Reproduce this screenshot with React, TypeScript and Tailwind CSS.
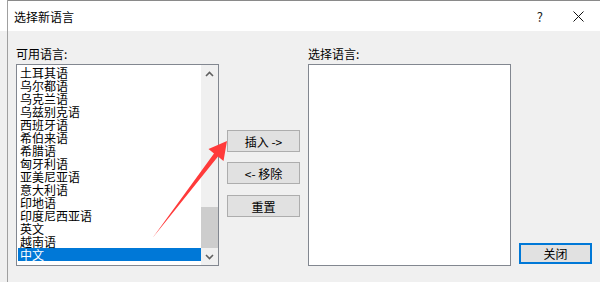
const languages = [
  "土耳其语",
  "乌尔都语",
  "乌克兰语",
  "乌兹别克语",
  "西班牙语",
  "希伯来语",
  "希腊语",
  "匈牙利语",
  "亚美尼亚语",
  "意大利语",
  "印地语",
  "印度尼西亚语",
  "英文",
  "越南语",
  "中文",
];

const font = { fontFamily: '"Noto Sans CJK SC", "Noto Sans", sans-serif' };

const Chevron: React.FC<{ up?: boolean }> = ({ up }) => (
  <svg width="9" height="6" viewBox="0 0 9 6">
    <path
      d={up ? "M1 5 L4.5 1.5 L8 5" : "M1 1 L4.5 4.5 L8 1"}
      fill="none"
      stroke="#606060"
      strokeWidth="1.6"
    />
  </svg>
);

const Button: React.FC<{ label: string; className?: string }> = ({ label, className }) => (
  <div
    className={`w-[73px] h-[22px] border border-[#adadad] bg-[#e1e1e1] flex items-center justify-center text-[12px] leading-[13px] text-black ${className ?? ""}`}
  >
    {label}
  </div>
);

export default function App() {
  return (
    <div className="relative w-[600px] h-[282px] overflow-hidden flex select-none" style={font}>
      {/* left strip outside the window */}
      <div className="w-[7px] flex flex-col">
        <div className="h-[31px] bg-white" />
        <div className="flex-1 bg-[#f0f0f0]" />
      </div>

      <div className="flex-1 flex flex-col border-l border-[#a0a0a0]">
        {/* title bar */}
        <div className="h-[31px] bg-white border-t border-[#8a8a8a] flex items-center pl-[6px]">
          <span className="text-[12px] leading-[13px] text-black">选择新语言</span>
          <span className="ml-auto text-[13px] leading-[13px] text-[#222] mr-[30px]">?</span>
          <svg width="11" height="11" viewBox="0 0 11 11" className="mr-[16px]">
            <path d="M0.5 0.5 L10.5 10.5 M10.5 0.5 L0.5 10.5" stroke="#111" strokeWidth="1" />
          </svg>
        </div>

        {/* body */}
        <div className="flex-1 bg-[#f0f0f0] flex pl-[8px] pt-[16px]">
          {/* available languages */}
          <div className="w-[203px] flex flex-col">
            <div className="h-[13px] leading-[13px] text-[12px] mb-[4px] text-black">可用语言:</div>
            <div className="h-[202px] border border-[#828790] bg-white flex">
              <div className="flex-1 pt-[1px] pl-[1px] overflow-hidden">
                {languages.map((l) => (
                  <div
                    key={l}
                    className={`h-[13px] leading-[13px] text-[12px] pl-[2px] whitespace-nowrap ${
                      l === "中文" ? "bg-[#0078d7] text-white" : "text-black"
                    }`}
                  >
                    {l}
                  </div>
                ))}
              </div>
              <div className="w-[17px] bg-[#f0f0f0] flex flex-col">
                <div className="h-[17px] flex items-center justify-center">
                  <Chevron up />
                </div>
                <div className="flex-1 flex flex-col justify-end">
                  <div className="h-[41px] bg-[#cdcdcd]" />
                </div>
                <div className="h-[17px] flex items-center justify-center">
                  <Chevron />
                </div>
              </div>
            </div>
          </div>

          {/* middle buttons */}
          <div className="w-[89px] pl-[8px] flex flex-col">
            <Button label="插入 ->" className="mt-[83px]" />
            <Button label="<- 移除" className="mt-[10px]" />
            <Button label="重置" className="mt-[11px]" />
          </div>

          {/* selected languages */}
          <div className="w-[203px] flex flex-col">
            <div className="h-[13px] leading-[13px] text-[12px] mb-[4px] text-black">选择语言:</div>
            <div className="h-[202px] border border-[#828790] bg-white" />
          </div>

          <div className="pl-[8px] flex flex-col">
            <div className="mt-[196px] w-[73px] h-[21px] border-2 border-[#0078d7] bg-[#e1e1e1] flex items-center justify-center text-[12px] leading-[13px] text-black">
              关闭
            </div>
          </div>
        </div>
      </div>

      {/* red annotation arrow */}
      <svg className="absolute left-0 top-0 pointer-events-none" width="600" height="282" viewBox="0 0 600 282">
        <polygon
          points="152.5,238 214,153.5 208.5,149 227,141 223.5,161 218,156.5"
          fill="#ff3a3a"
        />
      </svg>
    </div>
  );
}
